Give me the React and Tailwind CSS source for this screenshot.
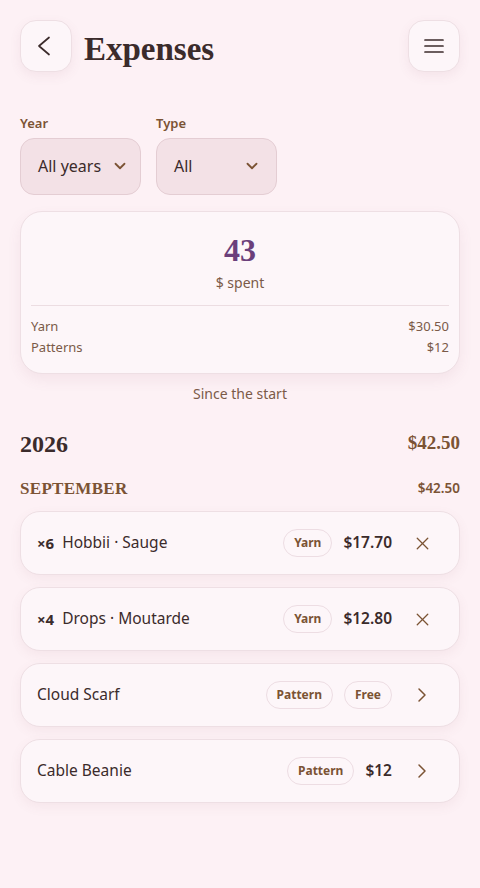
import { ChevronDown, ChevronRight, X } from 'lucide-react'

const sans = { fontFamily: '"Noto Sans", sans-serif' }
const serif = { fontFamily: '"Liberation Serif", serif' }

function Badge({ children }) {
  return (
    <span className="h-7 px-[10px] flex items-center rounded-full border border-[#eddde3] text-[12px] font-bold text-[#7b5334]">
      {children}
    </span>
  )
}

function Row({ qty, name, badges, price, action }) {
  return (
    <div className="h-16 flex items-center pl-4 pr-[19px] rounded-[20px] bg-[#fdf6f9] border border-[#eedfe4] shadow-[0_4px_12px_rgba(140,80,100,0.07)]">
      {qty && <span className="text-[15px] font-bold text-[#3b2b2b] mr-2">{qty}</span>}
      <span className="text-[15.5px] text-[#3b2b2b] flex-1">{name}</span>
      <div className="flex items-center gap-[11px]">
        {badges.map((b) => (
          <Badge key={b}>{b}</Badge>
        ))}
        {price && <span className="text-[15.5px] font-semibold text-[#3b2b2b]">{price}</span>}
        <span className="w-9 h-9 ml-[1px] flex items-center justify-center text-[#7b5334]">
          {action === 'x' ? <X size={21} strokeWidth={1.5} /> : <ChevronRight size={24} strokeWidth={1.5} />}
        </span>
      </div>
    </div>
  )
}

export default function App() {
  return (
    <div className="min-h-[888px] bg-[#fdf1f5] px-5 pt-5 pb-10" style={sans}>
      <header className="flex items-center">
        <button className="w-[52px] h-[52px] rounded-2xl bg-[#fdf6f9] border border-[#eedfe4] shadow-[0_4px_12px_rgba(140,80,100,0.08)] flex items-center justify-center text-[#3b2b2b]">
          <svg width="14" height="20" viewBox="0 0 14 20" fill="none" stroke="currentColor" strokeWidth="1.7" strokeLinecap="round" strokeLinejoin="round" className="mr-1">
            <polyline points="12 1.5 2 10 12 18.5" />
          </svg>
        </button>
        <h1 className="ml-3 text-[33px] font-bold text-[#3b2b2b] flex-1 pt-[6px] leading-none" style={serif}>
          Expenses
        </h1>
        <button className="w-[52px] h-[52px] rounded-2xl bg-[#fdf6f9] border border-[#eedfe4] shadow-[0_4px_12px_rgba(140,80,100,0.08)] flex items-center justify-center text-[#3b2b2b]">
          <svg width="20" height="14" viewBox="0 0 20 14" fill="none" stroke="currentColor" strokeWidth="1.7" strokeLinecap="round">
            <line x1="1" y1="1" x2="19" y2="1" />
            <line x1="1" y1="7" x2="19" y2="7" />
            <line x1="1" y1="13" x2="19" y2="13" />
          </svg>
        </button>
      </header>

      <div className="flex gap-[15px] mt-[42px]">
        <div>
          <div className="text-[13px] font-semibold text-[#7b5334] mb-[4px]">Year</div>
          <div className="w-[121px] h-[57px] rounded-[14px] bg-[#f3e1e6] border border-[#e4cdd3] flex items-center pl-[17px] pr-[14px] gap-[10px]">
            <span className="text-[16px] text-[#3b2b2b] whitespace-nowrap">All years</span>
            <ChevronDown size={18} strokeWidth={2.4} className="text-[#7b5334] shrink-0" />
          </div>
        </div>
        <div>
          <div className="text-[13px] font-semibold text-[#7b5334] mb-[4px]">Type</div>
          <div className="w-[121px] h-[57px] rounded-[14px] bg-[#f3e1e6] border border-[#e4cdd3] flex items-center justify-between pl-[17px] pr-[15px]">
            <span className="text-[16px] text-[#3b2b2b]">All</span>
            <ChevronDown size={18} strokeWidth={2.4} className="text-[#7b5334]" />
          </div>
        </div>
      </div>

      <div className="mt-4 rounded-[22px] bg-[#fdf6f9] border border-[#eedfe4] shadow-[0_6px_14px_rgba(140,80,100,0.08)] px-[10px] pt-[20px] pb-[15px]">
        <div className="text-center text-[32px] font-bold text-[#6b3f7b] leading-9" style={serif}>
          43
        </div>
        <div className="text-center text-[14px] text-[#7b5a48] mt-[4px]">$ spent</div>
        <div className="border-t border-[#ecdde2] mt-[12px] mb-[10px]" />
        <div className="flex justify-between text-[13px] text-[#7b5a48] leading-[21px]">
          <span>Yarn</span>
          <span>$30.50</span>
        </div>
        <div className="flex justify-between text-[13px] text-[#7b5a48] leading-[21px]">
          <span>Patterns</span>
          <span>$12</span>
        </div>
      </div>
      <div className="text-center text-[14px] text-[#7b5a48] mt-[9px]">Since the start</div>

      <div className="flex items-center justify-between mt-[22px]">
        <span className="text-[24px] font-bold text-[#3b2b2b]" style={serif}>2026</span>
        <span className="text-[19px] font-bold text-[#7b5334]" style={serif}>$42.50</span>
      </div>
      <div className="flex items-center justify-between mt-[14px]">
        <span className="text-[17px] font-bold tracking-[0.3px] text-[#7b5334] uppercase" style={serif}>September</span>
        <span className="text-[13.5px] font-semibold text-[#7b5334]">$42.50</span>
      </div>

      <div className="flex flex-col gap-3 mt-[10px]">
        <Row qty="×6" name="Hobbii · Sauge" badges={['Yarn']} price="$17.70" action="x" />
        <Row qty="×4" name="Drops · Moutarde" badges={['Yarn']} price="$12.80" action="x" />
        <Row name="Cloud Scarf" badges={['Pattern', 'Free']} action="chev" />
        <Row name="Cable Beanie" badges={['Pattern']} price="$12" action="chev" />
      </div>
    </div>
  )
}
